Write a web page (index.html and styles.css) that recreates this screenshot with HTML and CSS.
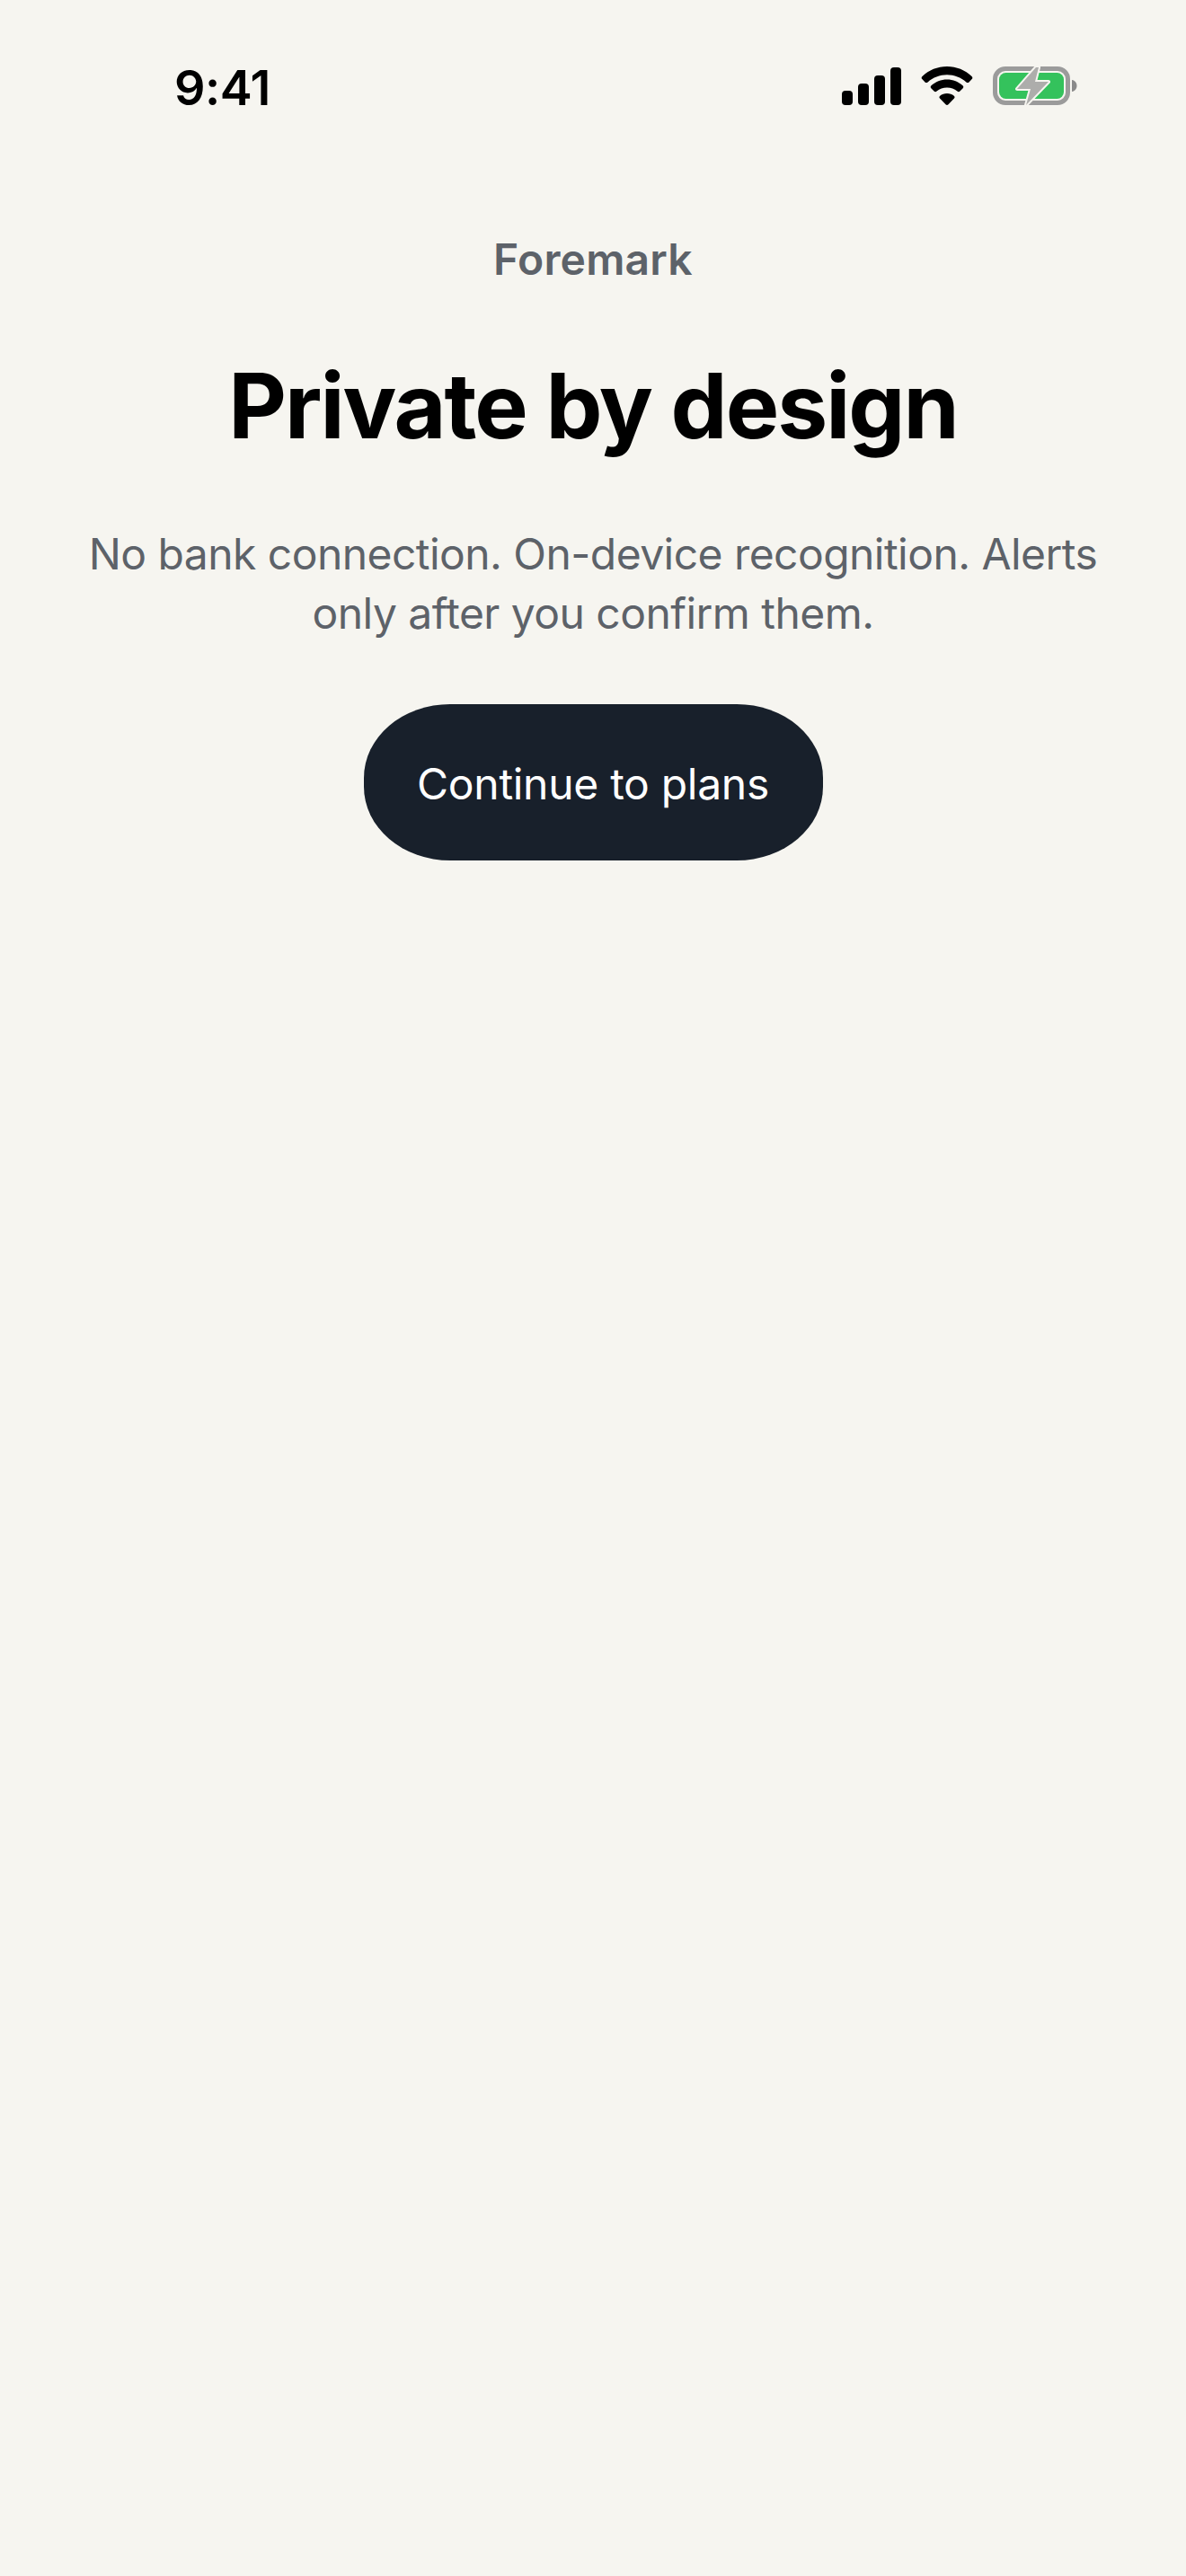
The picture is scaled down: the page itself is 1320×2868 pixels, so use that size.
FILE: index.html
```html
<!DOCTYPE html>
<html lang="en">
<head>
    <meta charset="UTF-8">
    <meta name="viewport" content="width=device-width, initial-scale=1.0">
    <title>Foremark - Private by design</title>
    <link rel="stylesheet" href="styles.css">
</head>
<body>

    <!-- Status bar -->
    <div class="status-bar">
        <span class="status-time">9:41</span>
        <div class="status-icons">
            <svg class="icon-signal" width="66" height="44" viewBox="0 0 66 44">
                <rect x="0" y="27" width="12" height="16" rx="4"/>
                <rect x="18" y="19" width="12" height="24" rx="4"/>
                <rect x="36" y="10" width="12" height="33" rx="4"/>
                <rect x="54" y="1" width="12" height="42" rx="4"/>
            </svg>
            <svg class="icon-wifi" width="58" height="44" viewBox="0 0 58 44">
                <path d="M29 0C39.500 0 49.200 4 56.500 10.900C57.600 12 57.600 13.200 56.700 14.100L53.500 17.400C52.600 18.300 51.400 18.300 50.400 17.400C44.600 12.300 37.100 9.300 29 9.300C20.900 9.300 13.400 12.300 7.600 17.400C6.600 18.300 5.400 18.300 4.500 17.400L1.300 14.100C0.400 13.200 0.400 12 1.500 10.900C8.800 4 18.500 0 29 0Z"/>
                <path d="M29 14.500C35.700 14.500 41.800 17 46.500 21.200C47.500 22.200 47.500 23.300 46.700 24.200L43.400 27.500C42.500 28.400 41.400 28.400 40.400 27.600C37.200 25 33.300 23.600 29 23.600C24.700 23.600 20.800 25 17.600 27.600C16.600 28.400 15.500 28.400 14.600 27.500L11.300 24.200C10.500 23.300 10.500 22.200 11.500 21.200C16.200 17 22.300 14.500 29 14.500Z"/>
                <path d="M29 30C32 30 34.700 31 36.800 32.800C37.800 33.700 37.800 34.700 37 35.500L30.500 42.200C29.600 43.200 28.400 43.200 27.500 42.200L21 35.500C20.200 34.700 20.200 33.700 21.200 32.800C23.300 31 26 30 29 30Z"/>
            </svg>
            <svg class="icon-battery" width="94" height="44" viewBox="0 0 94 44">
                <rect x="2.500" y="2.500" width="81" height="38" rx="11.500" fill="none" stroke="#9b9b9b" stroke-width="5"/>
                <rect x="7" y="7" width="72" height="29" rx="7.500" fill="#34c25c"/>
                <path d="M88 15C91.500 15.500 93.500 18.500 93.500 21.500C93.500 24.500 91.500 27.500 88 28Z" fill="#8a8a8a"/>
                <path d="M48 1L27 25H42L37 43L62 17H47L51 1Z" fill="#adadab" stroke="#f6f5f0" stroke-width="4" stroke-linejoin="round" paint-order="stroke"/>
            </svg>
        </div>
    </div>

    <div class="container">
        <p class="brand">Foremark</p>
        <h1>Private by design</h1>
        <p class="lead">No bank connection. On-device recognition. Alerts only after you confirm them.</p>
        <button class="continue-btn">Continue to plans</button>
    </div>

</body>
</html>
```

FILE: styles.css
```css
body {
    font-family: 'Inter', sans-serif;
    background-color: #f6f5f0;
    color: #000;
    margin: 0;
    padding: 0;
    height: 2868px;
    overflow: hidden;
}

.status-bar {
    display: flex;
    justify-content: space-between;
    align-items: center;
    height: 44px;
    padding: 74px 121px 0 194px;
}

.status-time {
    font-size: 54px;
    font-weight: 600;
    line-height: 44px;
    letter-spacing: -0.5px;
    padding-top: 4px;
}

.status-icons {
    display: flex;
    align-items: center;
    gap: 22px;
}

.status-icons svg {
    display: block;
}

.container {
    display: flex;
    flex-direction: column;
    align-items: center;
    padding: 0 84px;
    text-align: center;
}

.brand {
    font-size: 48px;
    font-weight: 600;
    line-height: 60px;
    letter-spacing: 0.2px;
    color: #5d6269;
    margin: 141px 0 0;
}

h1 {
    font-size: 100px;
    font-weight: 730;
    line-height: 120px;
    letter-spacing: -2px;
    margin: 73px 0 0;
}

.lead {
    font-size: 48px;
    font-weight: 400;
    line-height: 66px;
    letter-spacing: -0.55px;
    color: #5d6269;
    margin: 72px 0 0;
}

.continue-btn {
    font-family: inherit;
    font-size: 48px;
    font-weight: 400;
    letter-spacing: -0.3px;
    color: #fff;
    background-color: #18202b;
    border: none;
    border-radius: 96px / 82px;
    width: 511px;
    height: 174px;
    margin-top: 68px;
    padding: 2px 0 0;
}
```
